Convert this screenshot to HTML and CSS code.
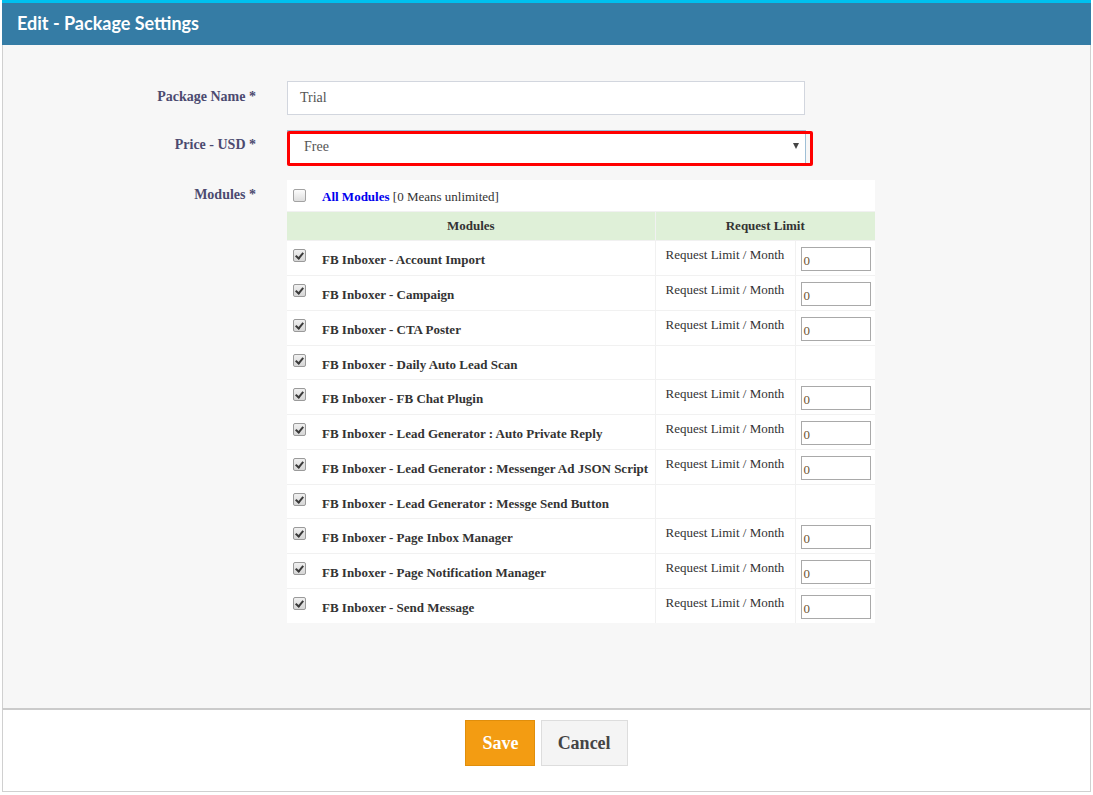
FILE: index.html
```html
<!DOCTYPE html>
<html>
<head>
<meta charset="utf-8">
<link rel="stylesheet" href="styles.css">
</head>
<body>
<div class="panel">
  <div class="panel-head">Edit - Package Settings</div>
  <div class="panel-body">
    <div class="form-row">
      <label class="lbl">Package Name *</label>
      <div class="field"><div class="text-input">Trial</div></div>
    </div>
    <div class="form-row row-price">
      <label class="lbl">Price - USD *</label>
      <div class="field">
        <div class="select-wrap">
          <div class="select">Free<span class="caret"></span></div>
          <div class="highlight"></div>
        </div>
      </div>
    </div>
    <div class="form-row row-modules">
      <label class="lbl">Modules *</label>
      <div class="field">
        <table class="mod-table">
          <colgroup><col class="c1"><col class="c2"><col class="c3"></colgroup>
          <tr class="all-row">
            <td colspan="3"><div class="chk-line"><span class="cb"></span><span><b class="all">All Modules</b> [0 Means unlimited]</span></div></td>
          </tr>
          <tr class="head-row"><th>Modules</th><th colspan="2">Request Limit</th></tr>
          <tr><td class="m"><div class="chk-line"><span class="cb on"></span><b>FB Inboxer - Account Import</b></div></td><td class="rl">Request Limit / Month</td><td class="inp"><div class="num">0</div></td></tr>
          <tr><td class="m"><div class="chk-line"><span class="cb on"></span><b>FB Inboxer - Campaign</b></div></td><td class="rl">Request Limit / Month</td><td class="inp"><div class="num">0</div></td></tr>
          <tr><td class="m"><div class="chk-line"><span class="cb on"></span><b>FB Inboxer - CTA Poster</b></div></td><td class="rl">Request Limit / Month</td><td class="inp"><div class="num">0</div></td></tr>
          <tr><td class="m"><div class="chk-line"><span class="cb on"></span><b>FB Inboxer - Daily Auto Lead Scan</b></div></td><td class="rl"></td><td class="inp"></td></tr>
          <tr><td class="m"><div class="chk-line"><span class="cb on"></span><b>FB Inboxer - FB Chat Plugin</b></div></td><td class="rl">Request Limit / Month</td><td class="inp"><div class="num">0</div></td></tr>
          <tr><td class="m"><div class="chk-line"><span class="cb on"></span><b>FB Inboxer - Lead Generator : Auto Private Reply</b></div></td><td class="rl">Request Limit / Month</td><td class="inp"><div class="num">0</div></td></tr>
          <tr><td class="m"><div class="chk-line"><span class="cb on"></span><b>FB Inboxer - Lead Generator : Messenger Ad JSON Script</b></div></td><td class="rl">Request Limit / Month</td><td class="inp"><div class="num">0</div></td></tr>
          <tr><td class="m"><div class="chk-line"><span class="cb on"></span><b>FB Inboxer - Lead Generator : Messge Send Button</b></div></td><td class="rl"></td><td class="inp"></td></tr>
          <tr><td class="m"><div class="chk-line"><span class="cb on"></span><b>FB Inboxer - Page Inbox Manager</b></div></td><td class="rl">Request Limit / Month</td><td class="inp"><div class="num">0</div></td></tr>
          <tr><td class="m"><div class="chk-line"><span class="cb on"></span><b>FB Inboxer - Page Notification Manager</b></div></td><td class="rl">Request Limit / Month</td><td class="inp"><div class="num">0</div></td></tr>
          <tr><td class="m"><div class="chk-line"><span class="cb on"></span><b>FB Inboxer - Send Message</b></div></td><td class="rl">Request Limit / Month</td><td class="inp"><div class="num">0</div></td></tr>
        </table>
      </div>
    </div>
  </div>
  <div class="panel-foot">
    <button class="btn btn-save">Save</button>
    <button class="btn btn-cancel">Cancel</button>
  </div>
</div>
</body>
</html>
```
FILE: styles.css
```css
html, body { margin: 0; padding: 0; background: #fff; }
body { font-family: "Liberation Serif", "Times New Roman", serif; font-size: 13px; color: #333; }

.panel { margin-left: 2px; width: 1089px; }
.panel-head {
  border-top: 3px solid #00c0ef;
  background: #357ca5;
  color: #fff;
  font-family: "Lato", "Open Sans", sans-serif;
  font-weight: 700;
  font-size: 18px;
  height: 42px;
  line-height: 40px;
  padding-left: 15px;
}
.panel-body {
  background: #f7f7f7;
  border-left: 1px solid #d0d0d0;
  border-right: 1px solid #d0d0d0;
  height: 663px;
  padding-top: 36px;
  box-sizing: border-box;
}
.form-row { display: flex; align-items: flex-start; }
.lbl {
  width: 253px;
  text-align: right;
  font-weight: 700;
  font-size: 14px;
  color: #4c4a70;
  line-height: 20px;
  padding-top: 6px;
  margin-right: 31px;
}
.text-input {
  width: 518px;
  height: 34px;
  box-sizing: border-box;
  border: 1px solid #d2d6de;
  background: #fff;
  padding: 0 12px;
  line-height: 32px;
  font-size: 14px;
  color: #555;
}
.row-price { margin-top: 15px; }
.row-price .lbl { padding-top: 5px; }
.select-wrap { position: relative; width: 526px; height: 36px; }
.select {
  width: 519px;
  height: 35px;
  box-sizing: border-box;
  border: 1px solid #9fbfd6;
  background: #fff;
  padding: 0 16px;
  line-height: 31px;
  font-size: 14px;
  color: #555;
  position: relative;
}
.caret {
  position: absolute;
  right: 6px;
  top: 12px;
  width: 0; height: 0;
  border-left: 3.5px solid transparent;
  border-right: 3.5px solid transparent;
  border-top: 6px solid #444;
}
.highlight {
  position: absolute;
  left: 0; top: 1px;
  width: 526px; height: 35px;
  box-sizing: border-box;
  border: 3px solid #f00;
  border-radius: 2px;
}
.row-modules { margin-top: 14px; }
.row-modules .lbl { padding-top: 5px; }

.mod-table {
  width: 588px;
  border-collapse: collapse;
  background: #fff;
  table-layout: fixed;
}
.c1 { width: 368px; }
.c2 { width: 140px; }
.c3 { width: 80px; }
.mod-table td, .mod-table th { border-top: 1px solid #f1f1f1; vertical-align: top; line-height: 18px; }
.mod-table td + td, .mod-table th + th { border-left: 1px solid #f1f1f1; }
.all-row td { border-top: none; padding: 8px 6px 5px; }
.chk-line { display: flex; align-items: flex-start; }
.cb {
  flex: none;
  width: 11px; height: 11px;
  margin-top: 1px;
  margin-right: 16px;
  border: 1px solid #a3a3a3;
  border-radius: 2px;
  background: linear-gradient(#fcfcfc, #dedede);
  position: relative;
}
.cb.on { margin-top: -2px; border-color: #9a9a9a; background: linear-gradient(#f0f0f0, #d6d6d6); }
.cb.on::after {
  content: "";
  position: absolute;
  left: 3px; top: 1px;
  width: 3px; height: 6px;
  border-right: 2px solid #3a3a3a;
  border-bottom: 2px solid #3a3a3a;
  transform: rotate(40deg);
}
.all { color: #0000ee; }
.head-row th {
  background: #dff0d8;
  font-weight: 700;
  padding: 5px 8px 5px;
  text-align: center;
  color: #333;
}
.mod-table td.m { padding: 10px 6px 5px; }
.mod-table td.rl { padding: 5px 6px 4px 10px; white-space: nowrap; }
.mod-table td.inp { padding: 6px 4px 4px 5px; }
.num {
  width: 70px; height: 24px;
  box-sizing: border-box;
  border: 1px solid #a9a9a9;
  padding: 0 2px;
  line-height: 26px;
  font-size: 13px;
  color: #6d5331;
}

.panel-foot {
  background: #fff;
  border: 1px solid #d0d0d0;
  border-top: 2px solid #cbcbcb;
  height: 84px;
  box-sizing: border-box;
  padding-top: 10px;
  text-align: center;
}
.btn {
  font-family: "Liberation Serif", "Times New Roman", serif;
  font-weight: 700;
  font-size: 18px;
  height: 46px;
  border-radius: 0;
  margin: 0 1px;
  vertical-align: top;
  cursor: pointer;
}
.btn-save { background: #f39c12; border: 1px solid #e08e0b; color: #fff; width: 70px; padding: 0; }
.btn-cancel { background: #f4f4f4; border: 1px solid #ddd; color: #444; width: 87px; padding: 0; }
```
